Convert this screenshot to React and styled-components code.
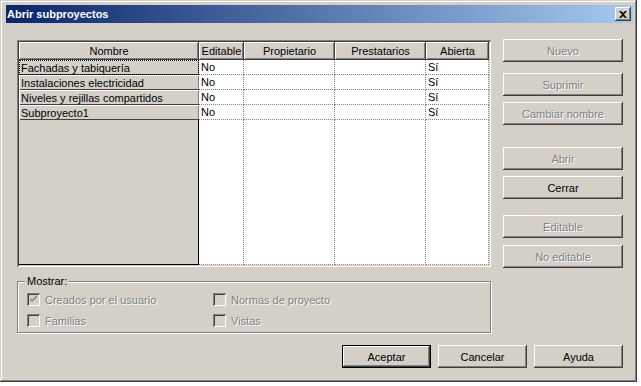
import React from 'react';
import styled, { createGlobalStyle } from 'styled-components';

const GlobalStyle = createGlobalStyle`
  html, body {
    margin: 0;
    padding: 0;
    background: #ffffff;
  }
  body {
    font-family: "Liberation Sans", Arial, sans-serif;
    font-size: 11px;
  }
`;

const Window = styled.div`
  box-sizing: border-box;
  width: 637px;
  height: 382px;
  padding: 5px 4px 0 6px;
  background: #d4d0c8;
  box-shadow: inset -1px -1px #404040, inset 1px 1px #d4d0c8,
    inset -2px -2px #808080, inset 2px 2px #ffffff;
`;

const TitleBar = styled.div`
  height: 18px;
  display: flex;
  align-items: center;
  justify-content: space-between;
  padding: 0 2px 0 1px;
  background: linear-gradient(to right, #0a246a, #a6caf0);
  color: #ffffff;
  font-weight: bold;
  font-size: 11px;
`;

const CloseButton = styled.div`
  width: 16px;
  height: 14px;
  display: flex;
  align-items: center;
  justify-content: center;
  background: #d4d0c8;
  box-shadow: inset -1px -1px #404040, inset 1px 1px #ffffff,
    inset -2px -2px #808080;
`;

const Body = styled.div`
  padding: 17px 10px 0 11px;
  display: flex;
  flex-direction: column;
`;

const TopRow = styled.div`
  display: flex;
  gap: 12px;
`;

const TableFrame = styled.div`
  box-sizing: border-box;
  width: 474px;
  height: 227px;
  padding: 2px;
  box-shadow: inset 1px 1px #808080, inset -1px -1px #ffffff,
    inset 2px 2px #404040, inset -2px -2px #d4d0c8;
`;

const Grid = styled.div`
  display: grid;
  grid-template-columns: 180px 45px 91px 91px 63px;
  grid-template-rows: 18px repeat(4, 15px) 1fr;
  height: 100%;
  background: #ffffff;
`;

const HeadCell = styled.div`
  display: flex;
  align-items: center;
  justify-content: center;
  background: #d4d0c8;
  box-shadow: inset -1px -1px #404040, inset 1px 1px #ffffff,
    inset -2px -2px #808080;
  white-space: nowrap;
  overflow: hidden;
`;

const RowHead = styled.div`
  display: flex;
  align-items: center;
  padding-left: 2px;
  background: #d4d0c8;
  box-shadow: inset 1px 1px #ffffff, inset 0 -1px #404040, inset -1px 0 #808080;
  white-space: nowrap;
  outline: ${p => (p.$focus ? '1px dotted #000' : 'none')};
  outline-offset: -1px;
`;

const Cell = styled.div`
  display: flex;
  align-items: center;
  padding-left: 2px;
  border-right: 1px dotted #808080;
  border-bottom: 1px dotted #808080;
  white-space: nowrap;
`;

const FillHead = styled.div`
  background: #d4d0c8;
  border-right: 1px solid #000;
  border-bottom: 1px solid #000;
`;

const FillCell = styled.div`
  border-right: 1px dotted #808080;
  border-bottom: 1px dotted #808080;
`;

const SideButtons = styled.div`
  display: flex;
  flex-direction: column;
  margin-top: -1px;
`;

const Button = styled.div`
  box-sizing: border-box;
  width: ${p => p.$w || 120}px;
  height: 23px;
  margin-top: ${p => p.$mt || 0}px;
  display: flex;
  align-items: center;
  justify-content: center;
  background: #d4d0c8;
  color: ${p => (p.$disabled ? '#808080' : '#000')};
  text-shadow: ${p => (p.$disabled ? '1px 1px 0 #ffffff' : 'none')};
  box-shadow: ${p =>
    p.$default
      ? 'inset 0 0 0 1px #000, inset -2px -2px #404040, inset 2px 2px #ffffff, inset -3px -3px #808080'
      : 'inset -1px -1px #404040, inset 1px 1px #ffffff, inset -2px -2px #808080, inset 2px 2px #d4d0c8'};
`;

const GroupBox = styled.div`
  position: relative;
  box-sizing: border-box;
  width: 474px;
  height: 52px;
  margin-top: 13px;
  padding: 11px 0 0 9px;
  border: 1px solid #808080;
  box-shadow: 1px 1px 0 #ffffff, inset 1px 1px 0 #ffffff;
`;

const Legend = styled.span`
  position: absolute;
  top: -7px;
  left: 7px;
  padding: 0 2px;
  background: #d4d0c8;
  color: #000;
`;

const CheckGrid = styled.div`
  display: grid;
  grid-template-columns: 186px auto;
  row-gap: 8px;
`;

const CheckItem = styled.div`
  display: flex;
  align-items: center;
  gap: 5px;
  height: 13px;
  color: #808080;
  text-shadow: 1px 1px 0 #ffffff;
`;

const Box = styled.div`
  width: 13px;
  height: 13px;
  flex: none;
  display: flex;
  align-items: center;
  justify-content: center;
  background: #d4d0c8;
  box-shadow: inset 1px 1px #808080, inset -1px -1px #ffffff,
    inset 2px 2px #404040, inset -2px -2px #d4d0c8;
`;

const BottomRow = styled.div`
  display: flex;
  justify-content: flex-end;
  gap: 7px;
  margin-top: 12px;
`;

const rows = [
  'Fachadas y tabiquería',
  'Instalaciones electricidad',
  'Niveles y rejillas compartidos',
  'Subproyecto1',
];

const Check = ({ checked, label }) => (
  <CheckItem>
    <Box>
      {checked && (
        <svg width="7" height="7" viewBox="0 0 7 7">
          <path d="M0 2 L0 4 L2 6 L7 1 L7 -1 L2 4 Z" fill="#808080" />
        </svg>
      )}
    </Box>
    {label}
  </CheckItem>
);

const App = () => (
  <>
    <GlobalStyle />
    <Window>
      <TitleBar>
        <span>Abrir subproyectos</span>
        <CloseButton>
          <svg width="8" height="7" viewBox="0 0 8 7">
            <path d="M0 0 H2 L4 2 L6 0 H8 L5 3.5 L8 7 H6 L4 5 L2 7 H0 L3 3.5 Z" fill="#000" />
          </svg>
        </CloseButton>
      </TitleBar>
      <Body>
        <TopRow>
          <TableFrame>
            <Grid>
              <HeadCell>Nombre</HeadCell>
              <HeadCell>Editable</HeadCell>
              <HeadCell>Propietario</HeadCell>
              <HeadCell>Prestatarios</HeadCell>
              <HeadCell>Abierta</HeadCell>
              {rows.map((name, i) => (
                <React.Fragment key={name}>
                  <RowHead $focus={i === 0}>{name}</RowHead>
                  <Cell>No</Cell>
                  <Cell />
                  <Cell />
                  <Cell>Sí</Cell>
                </React.Fragment>
              ))}
              <FillHead />
              <FillCell />
              <FillCell />
              <FillCell />
              <FillCell />
            </Grid>
          </TableFrame>
          <SideButtons>
            <Button $disabled>Nuevo</Button>
            <Button $disabled $mt={11}>Suprimir</Button>
            <Button $disabled $mt={6}>Cambiar nombre</Button>
            <Button $disabled $mt={22}>Abrir</Button>
            <Button $mt={6}>Cerrar</Button>
            <Button $disabled $mt={16}>Editable</Button>
            <Button $disabled $mt={7}>No editable</Button>
          </SideButtons>
        </TopRow>
        <GroupBox>
          <Legend>Mostrar:</Legend>
          <CheckGrid>
            <Check checked label="Creados por el usuario" />
            <Check label="Normas de proyecto" />
            <Check label="Familias" />
            <Check label="Vistas" />
          </CheckGrid>
        </GroupBox>
        <BottomRow>
          <Button $w={89} $default>Aceptar</Button>
          <Button $w={89}>Cancelar</Button>
          <Button $w={89}>Ayuda</Button>
        </BottomRow>
      </Body>
    </Window>
  </>
);

export default App;
